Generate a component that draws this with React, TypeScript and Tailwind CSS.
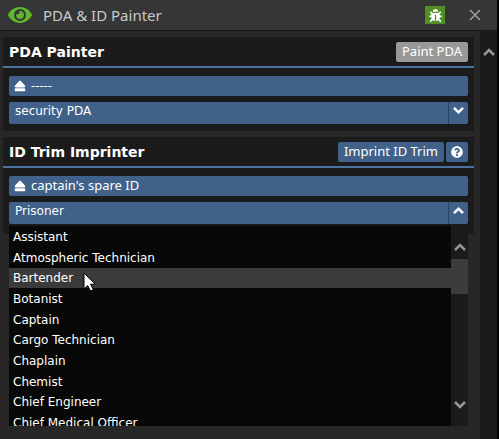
import { useState } from "react";
import type { ReactNode } from "react";
import { FaBug, FaEject, FaEye, FaQuestionCircle } from "react-icons/fa";

const PDA_TYPES = ["security PDA", "medical PDA", "engineering PDA"];

const TRIMS = [
  "Assistant",
  "Atmospheric Technician",
  "Bartender",
  "Botanist",
  "Captain",
  "Cargo Technician",
  "Chaplain",
  "Chemist",
  "Chief Engineer",
  "Chief Medical Officer",
];

function Chevron({ up = false, bold = false, className }: { up?: boolean; bold?: boolean; className: string }) {
  return (
    <svg viewBox="0 0 12 10" className={className} fill="none" stroke="currentColor" strokeWidth={bold ? 2.8 : 2.5}>
      <path d={up ? "M1 8 6 3l5 5" : "M1 2l5 5 5-5"} />
    </svg>
  );
}

function Section({ title, actions, children }: { title: string; actions: ReactNode; children: ReactNode }) {
  return (
    <section className="bg-[#1b1b1b]">
      <div className="flex h-[31px] items-center justify-between border-b-2 border-[#4972a1] px-1.5">
        <h2 className="text-sm font-bold">{title}</h2>
        <div className="flex gap-0.5 font-['Noto_Sans',sans-serif] text-[13px]">{actions}</div>
      </div>
      <div className="flex flex-col gap-1.5 px-1.5 pt-2 pb-[7px]">{children}</div>
    </section>
  );
}

function EjectButton({ children }: { children: ReactNode }) {
  return (
    <button className="flex h-5 w-full items-center gap-[5px] rounded-xs bg-[#40628a] px-[5px] font-['Noto_Sans',sans-serif] text-[13px]">
      <FaEject className="size-3" />
      {children}
    </button>
  );
}

function Dropdown({
  label,
  value,
  options,
  open = false,
  onChange,
}: {
  label: string;
  value: string;
  options: string[];
  open?: boolean;
  onChange: (value: string) => void;
}) {
  return (
    <div className="relative flex h-[22px] rounded-xs bg-[#40628a]">
      <select
        aria-label={label}
        value={value}
        onChange={(e) => onChange(e.target.value)}
        className="w-full appearance-none px-1.5 pb-1 outline-none"
      >
        {options.map((o) => (
          <option key={o}>{o}</option>
        ))}
      </select>
      <span className="pointer-events-none absolute inset-y-0 right-0 flex w-5 justify-center border-l border-[#2b4363] pt-1">
        <Chevron up={open} bold className="h-[9px] w-[11px]" />
      </span>
    </div>
  );
}

function TrimMenu({ onPick }: { onPick: (trim: string) => void }) {
  return (
    <div className="absolute inset-x-1.5 top-[89px] flex h-[200px] overflow-hidden bg-[#080808]">
      <ul role="listbox" aria-label="Trims" className="mt-px grid h-[206px] flex-1 content-between">
        {TRIMS.map((trim) => (
          <li
            key={trim}
            role="option"
            aria-selected={trim === "Bartender"}
            onClick={() => onPick(trim)}
            className="h-5 px-1 leading-5 hover:bg-[#3a3b3a] aria-selected:bg-[#3a3b3a]"
          >
            {trim}
          </li>
        ))}
      </ul>
      <div className="flex w-[17px] flex-col items-center bg-[#1b1b1b] text-[#969696]">
        <Chevron up className="mt-4 h-[10px] w-3" />
        <div className="mt-[7px] h-[35px] w-full bg-[#3b3c3b]" />
        <Chevron className="mt-auto mb-4 h-[10px] w-3" />
      </div>
      <svg viewBox="0 0 13 20" className="absolute top-[46px] left-[74px] h-5 w-[13px]">
        <path d="M1 1v16l3.7-3.5L7.5 19l2.8-1.2-2.7-5.6h4.6z" fill="#fff" stroke="#000" />
      </svg>
    </div>
  );
}

export default function App() {
  const [pda, setPda] = useState("security PDA");
  const [trim, setTrim] = useState("Prisoner");

  return (
    <div className="flex min-h-screen flex-col border-r-2 border-black bg-[#272727] font-['DejaVu_Sans',Verdana,sans-serif] text-xs text-white">
      <header className="flex h-[31px] items-center border-b border-[#171717] bg-[#363636] pr-4 pl-2">
        <FaEye className="size-6 text-[#5fb82c]" />
        <h1 className="ml-[11px] flex-1 font-['Noto_Sans',sans-serif] text-[15px] text-[#c9c9c9]">PDA &amp; ID Painter</h1>
        <button aria-label="Debug" className="flex h-[18px] w-5 items-center justify-center bg-[#4f8f26]">
          <FaBug className="size-[13px]" />
        </button>
        <button aria-label="Close" className="ml-6 text-[#a0a0a0]">
          <svg viewBox="0 0 12 12" className="size-3" stroke="currentColor" strokeWidth="1.5">
            <path d="M1 1l10 10M11 1 1 11" />
          </svg>
        </button>
      </header>

      <div className="flex flex-1">
        <main className="flex flex-1 flex-col gap-1.5 pt-1.5 pr-1.5 pl-[3px]">
          <Section
            title="PDA Painter"
            actions={
              <button disabled className="h-5 rounded-xs bg-[#999] px-1.5">
                Paint PDA
              </button>
            }
          >
            <EjectButton>-----</EjectButton>
            <Dropdown label="PDA type" value={pda} options={PDA_TYPES} onChange={setPda} />
          </Section>

          <div className="relative bg-[#1b1b1b] pb-[3px]">
            <Section
              title="ID Trim Imprinter"
              actions={
                <>
                  <button className="h-5 rounded-xs bg-[#40628a] px-1.5">Imprint ID Trim</button>
                  <button aria-label="Help" className="flex h-5 w-[22px] items-center justify-center rounded-xs bg-[#40628a]">
                    <FaQuestionCircle className="size-3" />
                  </button>
                </>
              }
            >
              <EjectButton>captain's spare ID</EjectButton>
              <Dropdown label="Trim" value={trim} options={["Prisoner", ...TRIMS]} open onChange={setTrim} />
            </Section>
            <TrimMenu onPick={setTrim} />
          </div>
        </main>

        <div className="flex w-[17px] justify-center bg-[#1b1b1b] pt-4 text-[#969696]">
          <Chevron up className="h-[10px] w-3" />
        </div>
      </div>
    </div>
  );
}
